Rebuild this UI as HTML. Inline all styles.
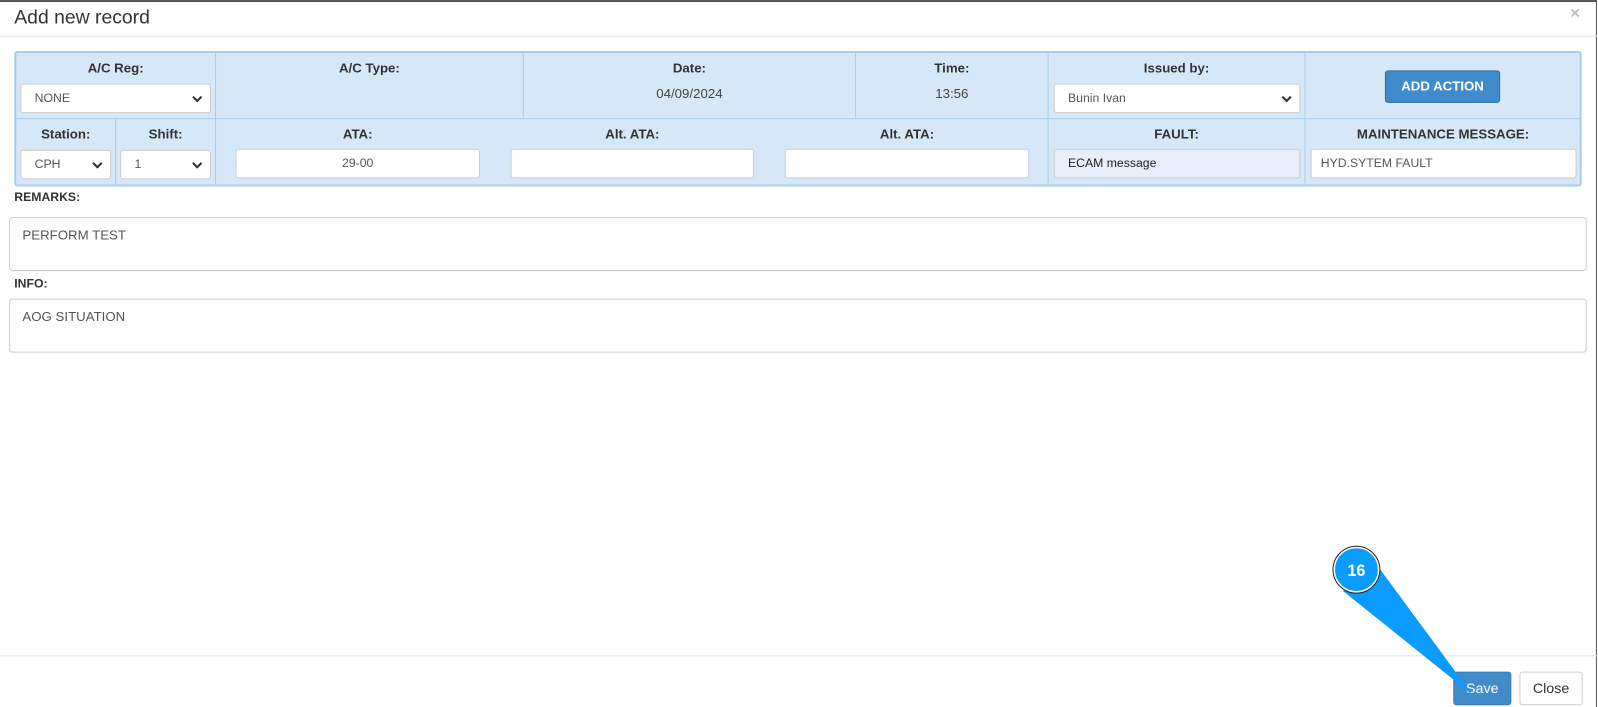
<!DOCTYPE html>
<html><head><style>
*{box-sizing:border-box}
html,body{margin:0;width:1598px;height:707px;overflow:hidden;background:#fff}
body{font-family:"Liberation Sans",Arial,sans-serif;color:#333;position:relative}
#w{position:absolute;left:0;top:0;width:1568px;height:694px;transform:scale(1.0191);transform-origin:0 0}
.frame{position:absolute;left:0;top:0;width:1567px;height:694px;border-top:2px solid #555;border-right:1px solid #555}
.title{position:absolute;left:14px;top:7px;font-size:19px;color:#333}
.x{position:absolute;left:1541px;top:5px;font-size:16px;color:#bbb;font-weight:bold}
.hr{position:absolute;left:0;width:1567px;height:1px;background:#e5e5e5}
.tbl{position:absolute;left:14px;top:50px;width:1538px;height:133px;background:#d6e8f7;border:2px solid #a9cde9;border-radius:3px}
.lbl{position:absolute;font-size:13px;font-weight:bold;color:#333;text-align:center}
.val{position:absolute;font-size:13px;color:#444;text-align:center}
.inp{position:absolute;background:#fff;border:1px solid #ccc;border-radius:3px;font-size:12px;color:#555;padding-left:13px;line-height:27px;height:29px}
.sel::after{content:"";position:absolute;right:9px;top:9px;width:5px;height:5px;border-right:2px solid #333;border-bottom:2px solid #333;transform:rotate(45deg)}
.sec{position:absolute;left:14px;font-size:12px;font-weight:bold;color:#333}
.ta{position:absolute;left:9px;width:1548px;height:53px;border:1px solid #ccc;border-radius:3px;font-size:13px;color:#555;padding:9px 12px}
</style></head><body><div id="w">
<div class="frame"></div>
<div class="title">Add new record</div>
<div class="x">×</div>
<div class="hr" style="top:35px"></div>

<div class="tbl"></div>
<div style="position:absolute;left:211px;top:52px;width:1px;height:129px;background:#a9cde9"></div>
<div style="position:absolute;left:513px;top:52px;width:1px;height:64px;background:#a9cde9"></div>
<div style="position:absolute;left:839px;top:52px;width:1px;height:64px;background:#a9cde9"></div>
<div style="position:absolute;left:1028px;top:52px;width:1px;height:129px;background:#a9cde9"></div>
<div style="position:absolute;left:1280px;top:52px;width:1px;height:129px;background:#a9cde9"></div>
<div style="position:absolute;left:113px;top:116px;width:1px;height:65px;background:#a9cde9"></div>
<div style="position:absolute;left:16px;top:116px;width:1534px;height:1px;background:#a9cde9"></div>

<div class="lbl" style="left:16px;width:195px;top:59px">A/C Reg:</div>
<div class="inp sel" style="left:20px;top:82px;width:187px">NONE</div>
<div class="lbl" style="left:212px;width:301px;top:59px">A/C Type:</div>
<div class="lbl" style="left:514px;width:325px;top:59px">Date:</div>
<div class="val" style="left:514px;width:325px;top:84px">04/09/2024</div>
<div class="lbl" style="left:840px;width:188px;top:59px">Time:</div>
<div class="val" style="left:840px;width:188px;top:84px">13:56</div>
<div class="lbl" style="left:1029px;width:251px;top:59px">Issued by:</div>
<div class="inp sel" style="left:1034px;top:82px;width:242px">Bunin Ivan</div>
<div style="position:absolute;left:1359px;top:69px;width:113px;height:32px;background:#3f8bcb;border:1px solid #2e6da4;border-radius:3px;color:#fff;font-weight:bold;font-size:13px;text-align:center;line-height:30px">ADD ACTION</div>

<div class="lbl" style="left:16px;width:97px;top:124px">Station:</div>
<div class="inp sel" style="left:20px;top:147px;width:89px">CPH</div>
<div class="lbl" style="left:114px;width:97px;top:124px">Shift:</div>
<div class="inp sel" style="left:118px;top:147px;width:89px">1</div>
<div class="lbl" style="left:231px;width:240px;top:124px">ATA:</div>
<div class="inp" style="left:231px;top:146px;width:240px;text-align:center;padding:0">29-00</div>
<div class="lbl" style="left:501px;width:239px;top:124px">Alt. ATA:</div>
<div class="inp" style="left:501px;top:146px;width:239px"></div>
<div class="lbl" style="left:770px;width:240px;top:124px">Alt. ATA:</div>
<div class="inp" style="left:770px;top:146px;width:240px"></div>
<div class="lbl" style="left:1029px;width:251px;top:124px">FAULT:</div>
<div class="inp" style="left:1034px;top:146px;width:242px;background:#e6eefa;color:#222">ECAM message</div>
<div class="lbl" style="left:1281px;width:270px;top:124px">MAINTENANCE MESSAGE:</div>
<div class="inp" style="left:1286px;top:146px;width:261px;padding-left:9px">HYD.SYTEM FAULT</div>

<div class="sec" style="top:186px">REMARKS:</div>
<div class="ta" style="top:213px">PERFORM TEST</div>
<div class="sec" style="top:271px">INFO:</div>
<div class="ta" style="top:293px">AOG SITUATION</div>

<div class="hr" style="top:643px"></div>
<div style="position:absolute;left:1426px;top:659px;width:57px;height:33px;background:#428bca;border:1px solid #357ebd;border-radius:3px;color:#fff;font-size:14px;text-align:center;line-height:31px">Save</div>
<div style="position:absolute;left:1491px;top:659px;width:62px;height:33px;background:#fff;border:1px solid #ccc;border-radius:3px;color:#333;font-size:14px;text-align:center;line-height:31px">Close</div>

<svg style="position:absolute;left:0;top:0" width="1568" height="694">
<polygon points="1345,546 1445,682 1318,580" fill="#0a9bff"/>
<circle cx="1331" cy="559" r="22" fill="#0a9bff" stroke="#fff" stroke-width="2"/>
<circle cx="1331" cy="559" r="23" fill="none" stroke="#222" stroke-width="1"/>
<text x="1331" y="565" text-anchor="middle" font-family="Liberation Sans" font-weight="bold" font-size="16" fill="#fff">16</text>
</svg>
</div></body></html>
